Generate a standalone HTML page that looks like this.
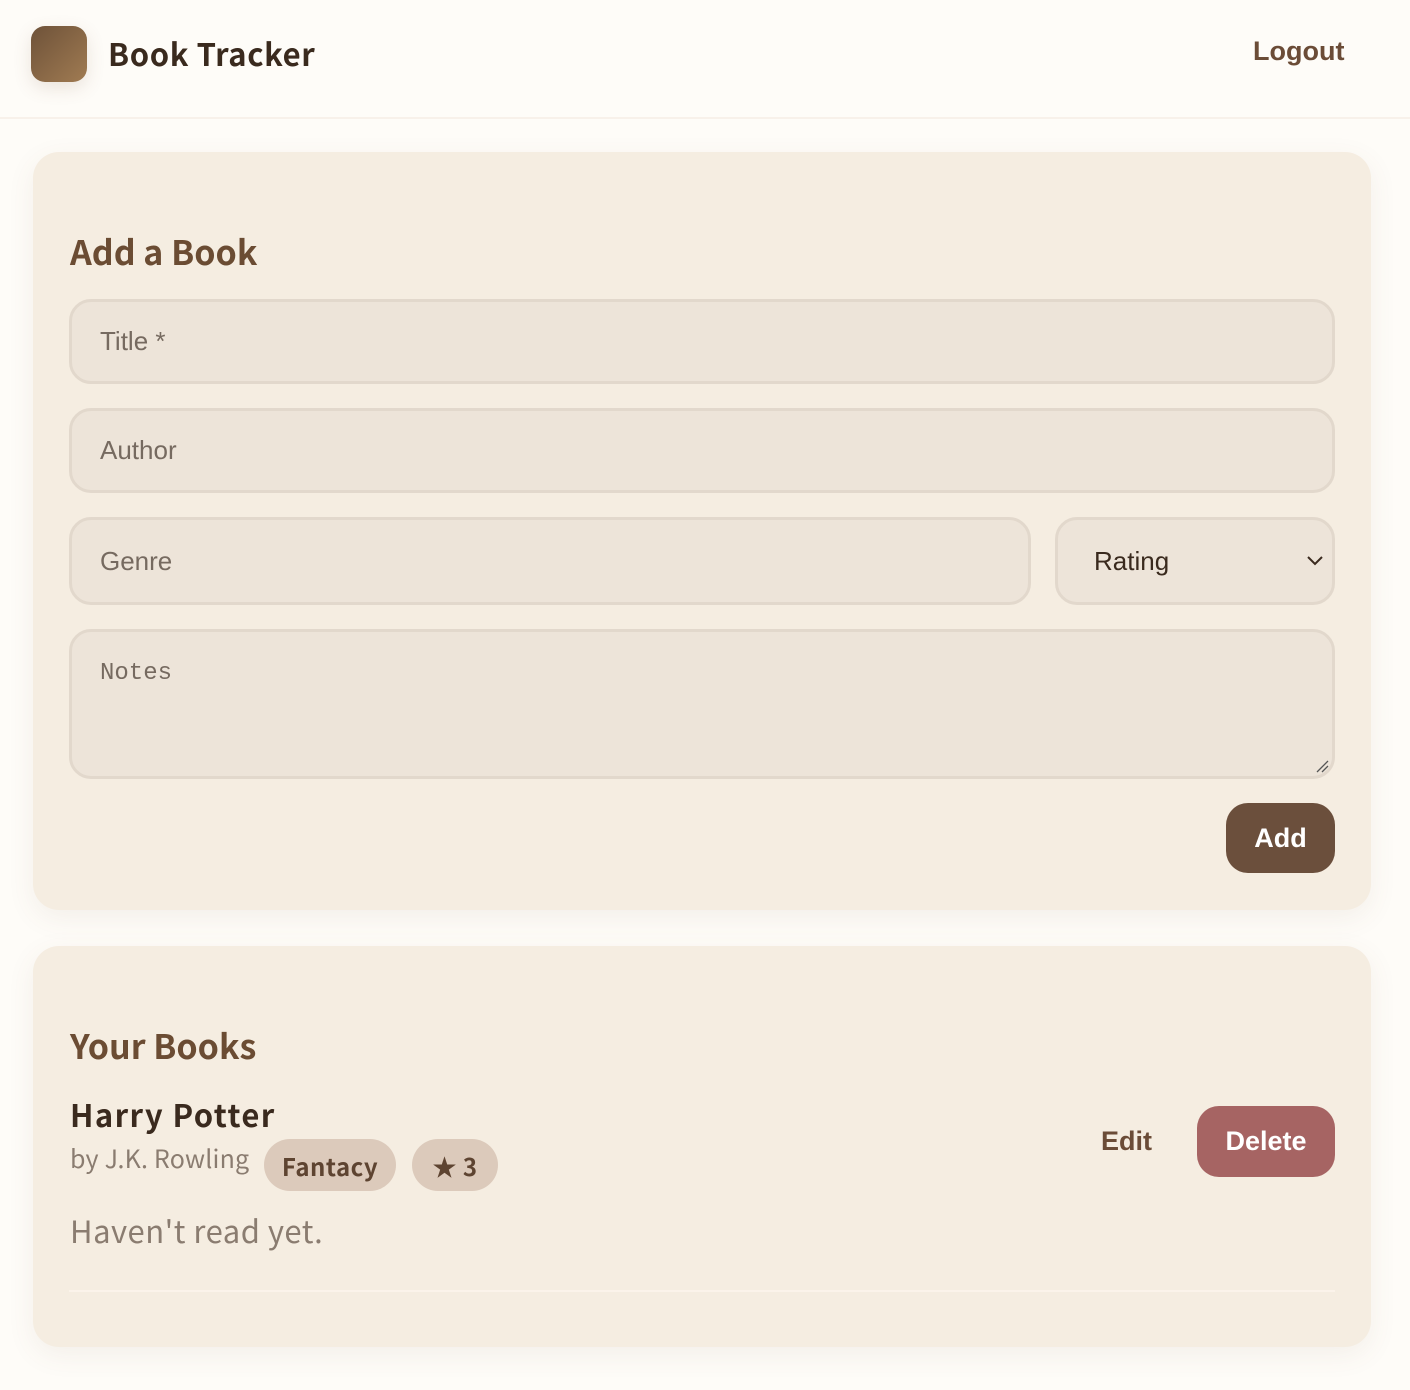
<!DOCTYPE html>
<html><head><meta charset="utf-8"><style>
*{box-sizing:border-box;margin:0;padding:0}
body{width:1410px;height:1390px;background:#fefcf8;font-family:"Liberation Sans",sans-serif;position:relative;overflow:hidden}
.hf{font-family:"Noto Sans CJK JP","Liberation Sans",sans-serif}
.header{position:absolute;left:0;top:0;width:1410px;height:119px;border-bottom:2px solid #f8f1ea}
.logo{position:absolute;left:31px;top:26px;width:56px;height:56px;border-radius:14px;background:linear-gradient(135deg,#6e5239,#a07b52);box-shadow:0 6px 18px rgba(120,90,60,.15)}
.brand{position:absolute;left:108px;top:30px;font-size:31px;font-weight:700;color:#3a2a1e;letter-spacing:.6px;line-height:46px}
.logout{position:absolute;left:1253px;top:36px;font-size:27px;font-weight:700;color:#6b4c37}
.card{position:absolute;left:33px;width:1338px;background:#f5ede1;border-radius:26px;box-shadow:0 8px 28px rgba(120,90,60,.08)}
h2{position:absolute;left:37px;font-size:34px;font-weight:700;color:#6b4c33;line-height:44px}
.inp{position:absolute;background:#ede4d9;border:3px solid #e2d8cc;border-radius:22px;font-size:26px;color:#766a60;padding-left:28px;display:flex;align-items:center}
.btn{position:absolute;color:#fff;font-weight:700;font-size:27px;display:flex;align-items:center;justify-content:center;border-radius:22px}
.chip{position:absolute;top:193px;height:52px;border-radius:26px;background:#dccabb;color:#5e4431;font-size:24px;font-weight:700;display:flex;align-items:center;justify-content:center;letter-spacing:.5px}
</style></head><body>
<div class="header"><div class="logo"></div><div class="brand hf">Book Tracker</div><div class="logout">Logout</div></div>

<div class="card" style="top:152px;height:758px">
  <h2 class="hf" style="top:77px">Add a Book</h2>
  <div class="inp" style="left:36px;top:147px;width:1266px;height:85px">Title *</div>
  <div class="inp" style="left:36px;top:256px;width:1266px;height:85px">Author</div>
  <div class="inp" style="left:36px;top:365px;width:962px;height:88px">Genre</div>
  <div class="inp" style="left:1022px;top:365px;width:280px;height:88px;color:#3a2a1e;padding-left:36px">Rating
    <svg style="position:absolute;right:8px;top:35px" width="18" height="12" viewBox="0 0 18 12"><path d="M2 2l7 7 7-7" fill="none" stroke="#3a2a1e" stroke-width="2"/></svg></div>
  <div class="inp" style="left:36px;top:477px;width:1266px;height:150px;align-items:flex-start;padding-top:28px;font-family:'Liberation Mono',monospace;font-size:24px">Notes
    <svg style="position:absolute;right:3px;bottom:3px" width="14" height="14" viewBox="0 0 14 14"><path d="M2 13L13 2M7 13L13 7" stroke="#555" stroke-width="1.3"/></svg></div>
  <div class="btn" style="left:1193px;top:651px;width:109px;height:70px;background:#6b4f3c">Add</div>
</div>

<div class="card" style="top:946px;height:401px">
  <h2 class="hf" style="top:77px">Your Books</h2>
  <div class="hf" style="position:absolute;left:37px;top:146px;font-size:31px;font-weight:700;color:#3a2a1e;letter-spacing:1.4px;line-height:44px">Harry Potter</div>
  <div class="hf" style="position:absolute;left:37px;top:195px;font-size:25px;color:#8a7c70;line-height:34px;letter-spacing:.2px">by J.K. Rowling</div>
  <div class="chip hf" style="left:231px;width:132px">Fantacy</div>
  <div class="chip hf" style="left:379px;width:86px">★ 3</div>
  <div class="hf" style="position:absolute;left:37px;top:263px;font-size:31px;color:#8a7c70;line-height:42px;letter-spacing:.5px">Haven't read yet.</div>
  <div style="position:absolute;left:36px;top:344px;width:1266px;height:2px;background:#fbf3ea"></div>
  <div style="position:absolute;left:1068px;top:180px;font-size:27px;font-weight:700;color:#6b4c37">Edit</div>
  <div class="btn" style="left:1164px;top:160px;width:138px;height:71px;background:#a66463">Delete</div>
</div>
</body></html>
